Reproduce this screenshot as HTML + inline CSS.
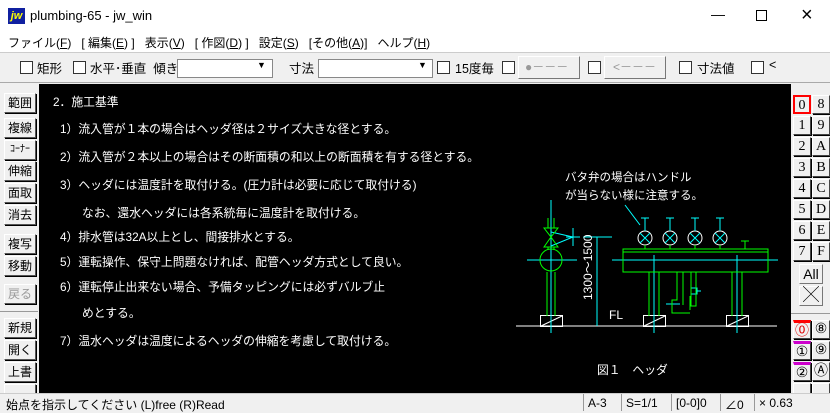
<!DOCTYPE html>
<html><head><meta charset="utf-8"><style>
*{margin:0;padding:0;box-sizing:border-box}
body{width:830px;height:412px;overflow:hidden;background:#f0f0f0;font-family:"Liberation Sans","Noto Sans CJK JP",sans-serif;font-size:12px;color:#000;position:relative}
.a{position:absolute;white-space:nowrap}
.cb{position:absolute;width:13px;height:13px;border:1px solid #333;background:#fff}
.lb{position:absolute;left:4px;width:32px;height:20px;border:1px solid;border-color:#fff #555 #555 #fff;background:#f0f0f0;font-size:12px;text-align:center;line-height:18px;box-shadow:1px 1px 0 #000}
.rb{position:absolute;width:18px;height:19px;border:1px solid;border-color:#fff #444 #444 #fff;background:#f0f0f0;font-family:"Liberation Serif",serif;font-size:14px;text-align:center;line-height:17px;box-shadow:1px 1px 0 #000}
.t{position:absolute;color:#fff;font-size:11.8px;white-space:nowrap}
.tl{top:58px;font-size:12.5px}
</style></head><body>
<div class="a" style="left:0;top:0;width:830px;height:32px;background:#fff"></div>
<div class="a" style="left:8px;top:8px;width:17px;height:16px;background:#1020a0;color:#ff0;font-weight:bold;font-style:italic;font-size:11px;line-height:16px;text-align:center">jw</div>
<div class="a" style="left:30px;top:8px;font-size:13px">plumbing-65 - jw_win</div>
<div class="a" style="left:711px;top:6px;font-size:14px">—</div>
<div class="a" style="left:756px;top:10px;width:11px;height:11px;border:1px solid #000"></div>
<div class="a" style="left:801px;top:4px;font-size:20px;font-weight:300">×</div>
<div class="a" style="left:0;top:32px;width:830px;height:20px;background:#fff"></div>
<div class="a" style="left:8px;top:34px;font-size:12px">ファイル(<u>F</u>)&nbsp;&nbsp;&nbsp;[ 編集(<u>E</u>) ]&nbsp;&nbsp;&nbsp;表示(<u>V</u>)&nbsp;&nbsp;&nbsp;[ 作図(<u>D</u>) ]&nbsp;&nbsp;&nbsp;設定(<u>S</u>)&nbsp;&nbsp;&nbsp;[その他(<u>A</u>)]&nbsp;&nbsp;&nbsp;ヘルプ(<u>H</u>)</div>
<div class="a" style="left:0;top:52px;width:830px;height:1px;background:#ccc"></div>
<div class="cb" style="left:20px;top:61px"></div><div class="a tl" style="left:37px">矩形</div>
<div class="cb" style="left:73px;top:61px"></div><div class="a tl" style="left:90px">水平･垂直&nbsp;&nbsp;傾き</div>
<div class="a" style="left:177px;top:59px;width:96px;height:19px;border:1px solid #888;background:#fff"></div>
<div class="a" style="left:257px;top:60px;font-size:9px">▼</div>
<div class="a tl" style="left:289px">寸法</div>
<div class="a" style="left:318px;top:59px;width:115px;height:19px;border:1px solid #888;background:#fff"></div>
<div class="a" style="left:418px;top:60px;font-size:9px">▼</div>
<div class="cb" style="left:437px;top:61px"></div><div class="a tl" style="left:455px">15度毎</div>
<div class="cb" style="left:502px;top:61px"></div>
<div class="a" style="left:518px;top:56px;width:62px;height:23px;border:1px solid;border-color:#fff #777 #777 #fff;color:#999;font-size:12px;line-height:21px;padding-left:6px">●－－－</div>
<div class="cb" style="left:588px;top:61px"></div>
<div class="a" style="left:604px;top:56px;width:62px;height:23px;border:1px solid;border-color:#fff #777 #777 #fff;color:#999;font-size:12px;line-height:21px;padding-left:8px">&lt;－－－</div>
<div class="cb" style="left:679px;top:61px"></div><div class="a tl" style="left:697px">寸法値</div>
<div class="cb" style="left:751px;top:61px"></div><div class="a tl" style="left:769px">&lt;</div>
<div class="a" style="left:0;top:82px;width:830px;height:1px;background:#aaa"></div>
<div class="a" style="left:39px;top:84px;width:752px;height:309px;background:#000"></div>
<div class="lb" style="top:93px">範囲</div>
<div class="lb" style="top:118px">複線</div>
<div class="lb" style="top:140px;font-size:10px">ｺｰﾅｰ</div>
<div class="lb" style="top:161px">伸縮</div>
<div class="lb" style="top:183px">面取</div>
<div class="lb" style="top:205px">消去</div>
<div class="lb" style="top:234px">複写</div>
<div class="lb" style="top:256px">移動</div>
<div class="lb" style="top:284px;color:#999">戻る</div>
<div class="a" style="left:0;top:311px;width:38px;height:1px;background:#999"></div>
<div class="lb" style="top:318px">新規</div>
<div class="lb" style="top:340px">開く</div>
<div class="lb" style="top:362px">上書</div>
<div class="lb" style="top:384px"></div>
<div class="t" style="left:53px;top:93px">2．施工基準</div>
<div class="t" style="left:60px;top:120px">1）流入管が１本の場合はヘッダ径は２サイズ大きな径とする。</div>
<div class="t" style="left:60px;top:148px">2）流入管が２本以上の場合はその断面積の和以上の断面積を有する径とする。</div>
<div class="t" style="left:60px;top:176px">3）ヘッダには温度計を取付ける。(圧力計は必要に応じて取付ける)</div>
<div class="t" style="left:82px;top:204px">なお、還水ヘッダには各系統毎に温度計を取付ける。</div>
<div class="t" style="left:60px;top:228px">4）排水管は32A以上とし、間接排水とする。</div>
<div class="t" style="left:60px;top:253px">5）運転操作、保守上問題なければ、配管ヘッダ方式として良い。</div>
<div class="t" style="left:60px;top:278px">6）運転停止出来ない場合、予備タッピングには必ずバルブ止</div>
<div class="t" style="left:82px;top:304px">めとする。</div>
<div class="t" style="left:60px;top:332px">7）温水ヘッダは温度によるヘッダの伸縮を考慮して取付ける。</div>
<div class="t" style="left:565px;top:169px;font-size:11.5px">バタ弁の場合はハンドル</div>
<div class="t" style="left:565px;top:187px;font-size:11.5px">が当らない様に注意する。</div>
<div class="t" style="left:597px;top:361px">図１　ヘッダ</div>
<svg class="a" style="left:0;top:0" width="830" height="412" fill="none" stroke-width="1">
<g stroke="#fff"><line x1="516" y1="326" x2="777" y2="326"/>
<rect x="540.5" y="315.5" width="22" height="11"/><rect x="643.5" y="315.5" width="22" height="11"/><rect x="726.5" y="315.5" width="22" height="11"/>
<line x1="541" y1="326" x2="562" y2="316"/><line x1="644" y1="326" x2="665" y2="316"/><line x1="727" y1="326" x2="748" y2="316"/>
<circle cx="645" cy="238" r="7"/><circle cx="670" cy="238" r="7"/><circle cx="695" cy="238" r="7"/><circle cx="720" cy="238" r="7"/></g>
<g stroke="#0ff"><line x1="551" y1="200" x2="551" y2="333"/><line x1="527" y1="260" x2="577" y2="260"/>
<line x1="597" y1="237" x2="597" y2="326"/><line x1="583" y1="237" x2="612" y2="237"/>
<line x1="612" y1="260" x2="778" y2="260"/><line x1="654" y1="255" x2="654" y2="333"/><line x1="737" y1="255" x2="737" y2="333"/>
<line x1="625" y1="205" x2="640" y2="225"/>
<path d="M551 232 L573 237 L551 246 M573 228 V246 M566 237 H580"/>
<path d="M640 233 L650 243 M650 233 L640 243 M665 233 L675 243 M675 233 L665 243 M690 233 L700 243 M700 233 L690 243 M715 233 L725 243 M725 233 L715 243"/>
<path d="M645 231 V218 M641 218 H649 M670 231 V218 M666 218 H674 M695 231 V218 M691 218 H699 M720 231 V218 M716 218 H724"/>
<rect x="691" y="288" width="6" height="6"/><path d="M697 291 H701 M666 304 H680"/></g>
<g stroke="#0f0"><circle cx="551" cy="260" r="11"/>
<path d="M547 272 V316 M555 272 V316 M544 228 L558 228 L551 237 Z M544 247 L558 247 L551 237 Z M548 218 V228 M554 218 V228 M548 247 V250 M554 247 V250"/>
<path d="M623 249 H768 V272 H623 Z M623 252 H768 M649 272 V316 M659 272 V316 M732 272 V316 M742 272 V316"/>
<path d="M645 245 V249 M670 245 V249 M695 245 V249 M720 245 V249 M745 241 V249 M741 241 H749"/>
<path d="M677 272 V300 H672 V313 H690 M683 272 V305 M691 272 V306 H696 V272 M690 296 V310"/></g>
</svg>
<div class="a" style="left:579px;top:300px;transform:rotate(-90deg);transform-origin:0 0;color:#fff;font-size:12px">1300～1500</div>
<div class="a" style="left:609px;top:308px;color:#fff;font-size:12px">FL</div>
<div class="a" style="left:791px;top:84px;width:39px;height:309px;background:#f0f0f0"></div>
<div class="rb" style="left:793px;top:95px;border:2px solid #f00;box-shadow:none">0</div><div class="rb" style="left:812px;top:95px">8</div>
<div class="rb" style="left:793px;top:116px">1</div><div class="rb" style="left:812px;top:116px">9</div>
<div class="rb" style="left:793px;top:137px">2</div><div class="rb" style="left:812px;top:137px">A</div>
<div class="rb" style="left:793px;top:158px">3</div><div class="rb" style="left:812px;top:158px">B</div>
<div class="rb" style="left:793px;top:179px">4</div><div class="rb" style="left:812px;top:179px">C</div>
<div class="rb" style="left:793px;top:200px">5</div><div class="rb" style="left:812px;top:200px">D</div>
<div class="rb" style="left:793px;top:221px">6</div><div class="rb" style="left:812px;top:221px">E</div>
<div class="rb" style="left:793px;top:242px">7</div><div class="rb" style="left:812px;top:242px">F</div>
<div class="a" style="left:799px;top:264px;width:24px;height:20px;border:1px solid;border-color:#fff #777 #777 #fff;font-size:14px;text-align:center;line-height:18px">All</div>
<div class="a" style="left:799px;top:286px;width:24px;height:20px;border:1px solid;border-color:#fff #777 #777 #fff;font-size:16px;text-align:center;line-height:18px">╳</div>
<div class="a" style="left:791px;top:313px;width:39px;height:1px;background:#999"></div>
<div class="rb" style="left:793px;top:320px;color:#d00;border-top:3px solid #f00">⓪</div><div class="rb" style="left:812px;top:320px">⑧</div>
<div class="rb" style="left:793px;top:341px;border-top:3px solid #c0c">①</div><div class="rb" style="left:812px;top:341px">⑨</div>
<div class="rb" style="left:793px;top:362px;border-top:3px solid #c0c">②</div><div class="rb" style="left:812px;top:362px">Ⓐ</div>
<div class="rb" style="left:793px;top:383px"></div><div class="rb" style="left:812px;top:383px"></div>
<div class="a" style="left:0;top:393px;width:830px;height:19px;background:#f0f0f0;border-top:1px solid #ccc"></div>
<div class="a" style="left:6px;top:396px;font-size:12px">始点を指示してください (L)free (R)Read</div>
<div class="a" style="left:583px;top:394px;width:35px;height:17px;border-left:1px solid #999;padding:2px 4px">A-3</div>
<div class="a" style="left:621px;top:394px;width:47px;height:17px;border-left:1px solid #999;padding:2px 4px">S=1/1</div>
<div class="a" style="left:671px;top:394px;width:47px;height:17px;border-left:1px solid #999;padding:2px 4px">[0-0]0</div>
<div class="a" style="left:720px;top:394px;width:32px;height:17px;border-left:1px solid #999;padding:2px 4px">∠0</div>
<div class="a" style="left:754px;top:394px;width:56px;height:17px;border-left:1px solid #999;padding:2px 4px">× 0.63</div>
</body></html>
